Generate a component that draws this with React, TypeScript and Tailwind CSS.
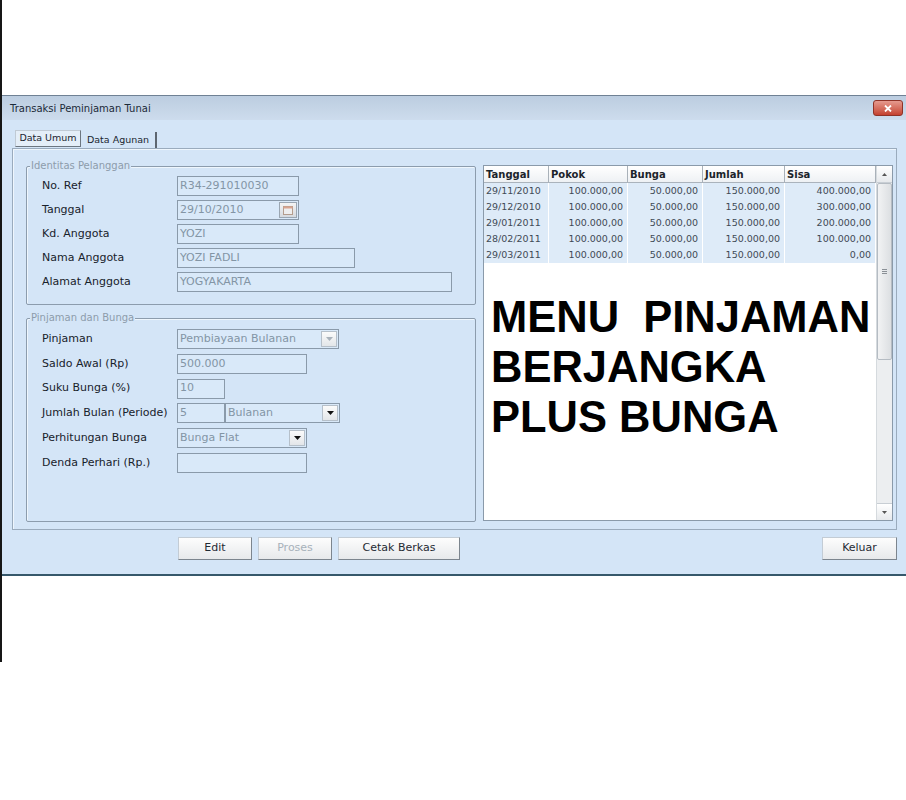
import type { ReactNode } from "react";

const FONT = { fontFamily: '"DejaVu Sans", Verdana, sans-serif' };

const schedule = [
  ["29/11/2010", "100.000,00", "50.000,00", "150.000,00", "400.000,00"],
  ["29/12/2010", "100.000,00", "50.000,00", "150.000,00", "300.000,00"],
  ["29/01/2011", "100.000,00", "50.000,00", "150.000,00", "200.000,00"],
  ["28/02/2011", "100.000,00", "50.000,00", "150.000,00", "100.000,00"],
  ["29/03/2011", "100.000,00", "50.000,00", "150.000,00", "0,00"],
];

const columns = [
  { title: "Tanggal", width: "w-[65px]" },
  { title: "Pokok", width: "w-[79px]" },
  { title: "Bunga", width: "w-[75px]" },
  { title: "Jumlah", width: "w-[82px]" },
  { title: "Sisa", width: "w-[91px]" },
];

function GroupBox({ title, className, children }: { title: string; className: string; children: ReactNode }) {
  return (
    <div className={`relative rounded-[2px] border border-[#8c9cad] shadow-[inset_1px_1px_0_#eef6fd] ${className}`}>
      <span className="absolute -top-[7px] left-[3px] bg-[#d4e5f7] px-[1px] text-[10px] leading-[12px] text-[#8d9cab]">
        {title}
      </span>
      {children}
    </div>
  );
}

function Row({ label, children }: { label: string; children: ReactNode }) {
  return (
    <div className="flex h-[20px] items-center">
      <span className="w-[135px] shrink-0 text-[11px] text-[#18222b]">{label}</span>
      {children}
    </div>
  );
}

function TextBox({ value = "", width }: { value?: string; width: string }) {
  return (
    <div
      className={`flex h-[20px] items-center border border-[#8a9aaa] bg-[#d9e9f9] pl-[2px] text-[11px] text-[#8395a5] ${width}`}
    >
      {value}
    </div>
  );
}

function Arrow({ dim }: { dim?: boolean }) {
  return (
    <div className="flex h-[16px] w-[16px] items-center justify-center border border-[#b6c0ca] bg-gradient-to-b from-[#fbfbfb] to-[#e3e6e9]">
      <svg width="7" height="4" viewBox="0 0 7 4">
        <path d="M0 0h7L3.5 4z" fill={dim ? "#a9b2bb" : "#111"} />
      </svg>
    </div>
  );
}

function ComboBox({ value, width, dim }: { value: string; width: string; dim?: boolean }) {
  return (
    <div
      className={`flex h-[20px] items-center justify-between border border-[#8a9aaa] bg-[#d9e9f9] pl-[2px] pr-[1px] text-[11px] text-[#8395a5] ${width}`}
    >
      <span>{value}</span>
      <Arrow dim={dim} />
    </div>
  );
}

function CalendarBox() {
  return (
    <div className="flex h-[20px] w-[122px] items-center justify-between border border-[#8a9aaa] bg-[#d9e9f9] pl-[2px] pr-[1px] text-[11px] text-[#8395a5]">
      <span>29/10/2010</span>
      <div className="flex h-[16px] w-[18px] items-center justify-center border border-[#9aa6b2] bg-gradient-to-b from-[#f4f4f4] to-[#d6dadf]">
        <svg width="10" height="9" viewBox="0 0 10 9">
          <rect x="0.5" y="0.5" width="9" height="8" fill="#eee" stroke="#b49c8c" />
          <rect x="0.5" y="0.5" width="9" height="2" fill="#d9a48f" />
        </svg>
      </div>
    </div>
  );
}

function Button({ label, width, disabled }: { label: string; width: string; disabled?: boolean }) {
  return (
    <div
      className={`flex h-[23px] items-center justify-center border border-[#c3ccd5] border-b-[#7c858e] border-r-[#7c858e] bg-gradient-to-b from-[#fdfdfd] to-[#e7e9eb] text-[11px] ${width} ${
        disabled ? "text-[#a7b1ba]" : "text-[#1f2a33]"
      }`}
    >
      {label}
    </div>
  );
}

function Schedule() {
  return (
    <div className="flex h-[356px] w-[410px] border border-[#8a9aaa] bg-white">
      <div className="flex flex-1 flex-col">
        <div className="flex h-[17px] border-b border-[#aab3bc] bg-gradient-to-b from-white to-[#eef1f4]">
          {columns.map((c) => (
            <div
              key={c.title}
              className={`flex items-center border-r border-[#a9b1b9] pl-[2px] text-[10px] font-bold text-[#1c242b] ${c.width}`}
            >
              {c.title}
            </div>
          ))}
        </div>
        {schedule.map((r) => (
          <div key={r[0]} className="flex h-[16px]">
            {r.map((v, i) => (
              <div
                key={i}
                className={`flex items-center border-r border-white bg-[#deebf8] text-[9.5px] text-[#3e4a55] ${columns[i].width} ${
                  i === 0 ? "pl-[2px]" : "justify-end pr-[4px]"
                }`}
              >
                {v}
              </div>
            ))}
          </div>
        ))}
        <div
          className="mt-[29px] whitespace-pre pl-[7px] text-[43.5px] font-bold leading-[50px] text-black"
          style={{ fontFamily: '"Liberation Sans", Arial, sans-serif' }}
        >
          {"MENU  PINJAMAN\nBERJANGKA\nPLUS BUNGA"}
        </div>
      </div>
      <div className="flex w-[16px] flex-col border-l border-[#d5dade] bg-[#eceef0]">
        <div className="flex h-[17px] items-center justify-center border-b border-[#c8ced4] bg-gradient-to-b from-white to-[#e6e9ec]">
          <svg width="5" height="3" viewBox="0 0 5 3">
            <path d="M0 3h5L2.5 0z" fill="#555" />
          </svg>
        </div>
        <div className="flex h-[177px] items-center justify-center rounded-[2px] border border-[#b5bcc3] bg-gradient-to-r from-[#f2f3f4] to-[#dcdfe2]">
          <div className="flex flex-col gap-[1px]">
            <span className="h-px w-[5px] bg-[#8a9096]" />
            <span className="h-px w-[5px] bg-[#8a9096]" />
            <span className="h-px w-[5px] bg-[#8a9096]" />
          </div>
        </div>
        <div className="flex-1" />
        <div className="flex h-[17px] items-center justify-center border-t border-[#c8ced4] bg-gradient-to-b from-white to-[#e6e9ec]">
          <svg width="5" height="3" viewBox="0 0 5 3">
            <path d="M0 0h5L2.5 3z" fill="#555" />
          </svg>
        </div>
      </div>
    </div>
  );
}

export default function App() {
  return (
    <div className="flex h-[800px] w-[906px] bg-white" style={FONT}>
      <div className="h-[662px] w-[2px] shrink-0 bg-[#161616]" />
      <div className="flex-1 pt-[95px]">
        <div className="flex h-[481px] flex-col border-t border-b-2 border-[#6f8194] border-b-[#36586b] bg-[#d4e5f7]">
          {/* title bar */}
          <div className="flex h-[24px] items-center justify-between bg-gradient-to-b from-[#bccde0] to-[#cddced] pl-[8px] pr-[4px]">
            <span className="text-[10px] text-[#1b2a38]">Transaksi Peminjaman Tunai</span>
            <div className="flex h-[16px] w-[30px] items-center justify-center rounded-[3px] border border-[#8f3227] bg-gradient-to-b from-[#e59a8f] to-[#c4402f]">
              <svg width="8" height="7" viewBox="0 0 8 7">
                <path d="M1 0.5l6 6M7 0.5l-6 6" stroke="white" strokeWidth="1.8" />
              </svg>
            </div>
          </div>

          <div className="flex flex-1 flex-col px-[10px] pt-[10px]">
            {/* tabs */}
            <div className="flex h-[18px] items-start pl-[3px] text-[9.5px] text-[#1b2530]">
              <div className="flex h-[17px] w-[66px] items-center justify-center border border-[#c0cad4] border-b-[#6c7680] border-r-[#6c7680] bg-[#e4eef8]">
                Data Umum
              </div>
              <div className="mt-[2px] flex h-[16px] w-[76px] items-center justify-center border-r-2 border-[#5d6670]">
                Data Agunan
              </div>
            </div>

            {/* tab page */}
            <div className="flex h-[382px] gap-[7px] border border-[#9aabbd] pl-[13px] pr-[3px] pt-[16px] shadow-[inset_1px_1px_0_#eef6fd]">
              <div className="flex w-[450px] flex-col gap-[13px] pt-[1px]">
                <GroupBox title="Identitas Pelanggan" className="h-[139px]">
                  <div className="flex flex-col gap-[4px] pl-[15px] pt-[9px]">
                    <Row label="No. Ref">
                      <TextBox value="R34-291010030" width="w-[122px]" />
                    </Row>
                    <Row label="Tanggal">
                      <CalendarBox />
                    </Row>
                    <Row label="Kd. Anggota">
                      <TextBox value="YOZI" width="w-[122px]" />
                    </Row>
                    <Row label="Nama Anggota">
                      <TextBox value="YOZI FADLI" width="w-[178px]" />
                    </Row>
                    <Row label="Alamat Anggota">
                      <TextBox value="YOGYAKARTA" width="w-[275px]" />
                    </Row>
                  </div>
                </GroupBox>
                <GroupBox title="Pinjaman dan Bunga" className="h-[204px]">
                  <div className="flex flex-col gap-[4.8px] pl-[15px] pt-[10px]">
                    <Row label="Pinjaman">
                      <ComboBox value="Pembiayaan Bulanan" width="w-[162px]" dim />
                    </Row>
                    <Row label="Saldo Awal (Rp)">
                      <TextBox value="500.000" width="w-[130px]" />
                    </Row>
                    <Row label="Suku Bunga (%)">
                      <TextBox value="10" width="w-[48px]" />
                    </Row>
                    <Row label="Jumlah Bulan (Periode)">
                      <TextBox value="5" width="w-[48px]" />
                      <ComboBox value="Bulanan" width="w-[115px]" />
                    </Row>
                    <Row label="Perhitungan Bunga">
                      <ComboBox value="Bunga Flat" width="w-[130px]" />
                    </Row>
                    <Row label="Denda Perhari (Rp.)">
                      <TextBox width="w-[130px]" />
                    </Row>
                  </div>
                </GroupBox>
              </div>
              <Schedule />
            </div>

            {/* buttons */}
            <div className="mt-[7px] flex gap-[6px] pl-[166px]">
              <Button label="Edit" width="w-[74px]" />
              <Button label="Proses" width="w-[74px]" disabled />
              <Button label="Cetak Berkas" width="w-[122px]" />
              <div className="flex-1" />
              <Button label="Keluar" width="w-[75px]" />
            </div>
          </div>
        </div>
      </div>
    </div>
  );
}
